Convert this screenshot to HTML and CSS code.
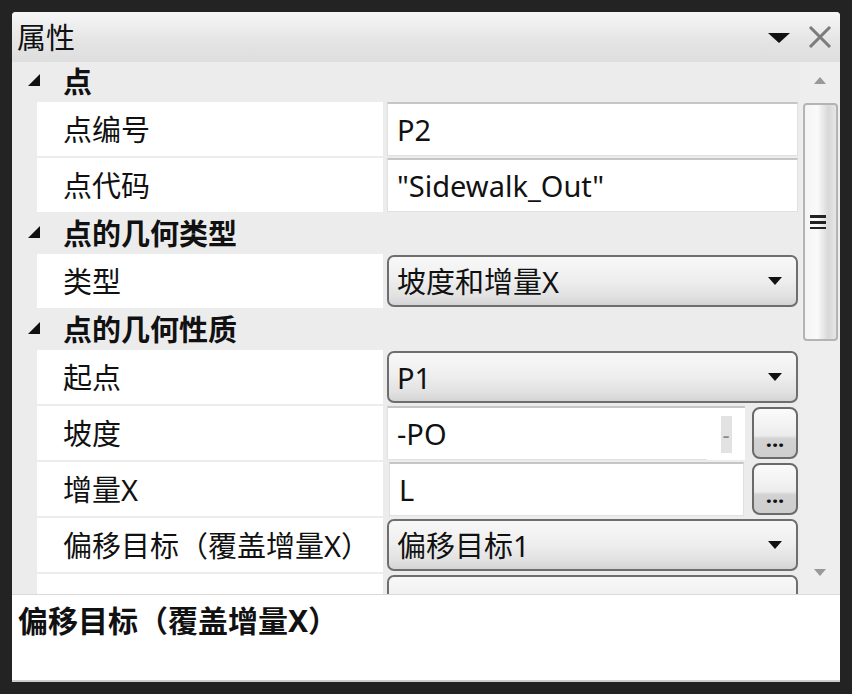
FILE: index.html
```html
<!DOCTYPE html>
<html lang="zh-CN">
<head>
  <meta charset="UTF-8">
  <title>属性</title>
  <link rel="stylesheet" href="styles.css">
</head>
<body>
  <div class="panel">
    <div class="titlebar">
      <span class="title">属性</span>
      <span class="tools">
        <svg class="menu-arrow" width="22" height="10" viewBox="0 0 22 10"><polygon points="0,0 22,0 11,10" fill="#111"/></svg>
        <svg class="close" width="24" height="22" viewBox="0 0 24 22"><path d="M2 1 L22 21 M22 1 L2 21" stroke="#7c7c7c" stroke-width="3" fill="none"/></svg>
      </span>
    </div>

    <div class="body">
      <div class="grid">
        <div class="cat">
          <svg class="expander" width="12" height="12" viewBox="0 0 12 12"><polygon points="12,0 12,12 0,12" fill="#111"/></svg>
          <span>点</span>
        </div>
        <div class="prop">
          <div class="label">点编号</div>
          <div class="value field">P2</div>
        </div>
        <div class="prop">
          <div class="label">点代码</div>
          <div class="value field">"Sidewalk_Out"</div>
        </div>

        <div class="cat">
          <svg class="expander" width="12" height="12" viewBox="0 0 12 12"><polygon points="12,0 12,12 0,12" fill="#111"/></svg>
          <span>点的几何类型</span>
        </div>
        <div class="prop">
          <div class="label">类型</div>
          <div class="value combo"><span>坡度和增量X</span><i class="drop"></i></div>
        </div>

        <div class="cat">
          <svg class="expander" width="12" height="12" viewBox="0 0 12 12"><polygon points="12,0 12,12 0,12" fill="#111"/></svg>
          <span>点的几何性质</span>
        </div>
        <div class="prop">
          <div class="label">起点</div>
          <div class="value combo"><span>P1</span><i class="drop"></i></div>
        </div>
        <div class="prop">
          <div class="label">坡度</div>
          <div class="value split">
            <div class="field slope">-PO</div>
            <div class="spin"><span>-</span></div>
            <div class="dots">...</div>
          </div>
        </div>
        <div class="prop">
          <div class="label">增量X</div>
          <div class="value split">
            <div class="field delta">L</div>
            <div class="dots">...</div>
          </div>
        </div>
        <div class="prop">
          <div class="label">偏移目标（覆盖增量X）</div>
          <div class="value combo"><span>偏移目标1</span><i class="drop"></i></div>
        </div>
        <div class="prop">
          <div class="label"></div>
          <div class="value combo"></div>
        </div>
      </div>

      <div class="scrollbar">
        <i class="arrow up"></i>
        <div class="thumb"><span class="grip"></span></div>
        <i class="arrow down"></i>
      </div>
    </div>

    <div class="desc">偏移目标（覆盖增量X）</div>
  </div>
</body>
</html>
```

FILE: styles.css
```css
body {
  margin: 0;
  padding: 12px;
  background: #232323;
  font-family: "Noto Sans", "Noto Sans CJK SC", sans-serif;
  color: #111;
}
.panel {
  width: 828px;
  height: 670px;
  display: flex;
  flex-direction: column;
  background: #ececec;
  border-radius: 4px 4px 0 0;
  overflow: hidden;
}
.titlebar {
  height: 50px;
  flex: none;
  display: flex;
  align-items: center;
  justify-content: space-between;
  padding: 0 8px 0 5px;
  background: linear-gradient(#f6f6f6, #e4e4e4 60%, #dedede);
}
.title {
  font-size: 29px;
  line-height: 1;
  margin-top: 1px;
}
.tools {
  display: flex;
  align-items: center;
  gap: 18px;
}
.menu-arrow {
  margin-top: 2px;
}
.body {
  height: 532px;
  flex: none;
  display: flex;
  overflow: hidden;
}
.grid {
  width: 788px;
  overflow: hidden;
}
.cat {
  height: 39px;
  margin-bottom: 1px;
  display: flex;
  align-items: center;
  font-size: 29px;
  font-weight: bold;
  line-height: 1;
}
.expander {
  margin: 0 23px 4px 16px;
}
.prop {
  height: 54px;
  margin-bottom: 2px;
  display: flex;
  padding-left: 25px;
}
.label {
  width: 320px;
  padding-left: 26px;
  background: #fff;
  display: flex;
  align-items: center;
  font-size: 29px;
  line-height: 1;
  white-space: nowrap;
}
.value {
  width: 411px;
  margin-left: 4px;
  box-sizing: border-box;
  font-size: 29px;
  line-height: 1;
}
.field {
  display: flex;
  align-items: center;
  background: #fff;
  border: 1px solid #e0e0e0;
  border-top: 2px solid #c6c6c6;
  padding-left: 9px;
  box-sizing: border-box;
  height: 54px;
}
.combo {
  height: 52px;
  margin-top: 1px;
  display: flex;
  align-items: center;
  justify-content: space-between;
  padding: 0 14px 0 8px;
  border: 2px solid #6e6e6e;
  border-radius: 7px;
  background: linear-gradient(#f8f8f8, #efefef 45%, #e2e2e2 80%, #d4d4d4);
}
.drop {
  width: 0;
  height: 0;
  border-left: 7px solid transparent;
  border-right: 7px solid transparent;
  border-top: 8px solid #111;
}
.split {
  display: flex;
  align-items: center;
}
.slope {
  width: 320px;
  border-right: none;
}
.spin {
  width: 38px;
  height: 54px;
  box-sizing: border-box;
  background: #fff;
  border-top: 2px solid #c6c6c6;
  display: flex;
  justify-content: center;
  align-items: center;
}
.spin span {
  width: 11px;
  height: 37px;
  background: #e2e2e2;
  color: #888;
  font-size: 22px;
  display: flex;
  justify-content: center;
  align-items: center;
}
.delta {
  width: 355px;
  margin-left: 2px;
}
.dots {
  width: 46px;
  height: 52px;
  margin-left: auto;
  box-sizing: border-box;
  border: 2px solid #6a6a6a;
  border-radius: 8px;
  background: linear-gradient(#fbfbfb, #ececec 55%, #d2d2d2 62%, #cdcdcd);
  font-size: 22px;
  font-weight: bold;
  line-height: 1;
  display: flex;
  justify-content: center;
  align-items: flex-end;
  padding-bottom: 8px;
}
.scrollbar {
  width: 40px;
  flex: none;
  display: flex;
  flex-direction: column;
  align-items: center;
  background: #eeeeee;
}
.arrow {
  width: 0;
  height: 0;
  border-left: 6px solid transparent;
  border-right: 6px solid transparent;
}
.arrow.up {
  margin-top: 15px;
  border-bottom: 7px solid #999;
}
.arrow.down {
  margin-top: auto;
  margin-bottom: 18px;
  border-top: 7px solid #999;
}
.thumb {
  width: 35px;
  height: 238px;
  margin-top: 19px;
  box-sizing: border-box;
  border: 2px solid #b4b4b4;
  border-radius: 4px;
  background: linear-gradient(to right, #f4f4f4, #fafafa 40%, #d8d8d8 75%, #e6e6e6);
  display: flex;
  justify-content: center;
  align-items: center;
}
.grip {
  width: 16px;
  height: 14px;
  margin-left: -4px;
  background: repeating-linear-gradient(#222 0 3px, transparent 3px 6px);
}
.desc {
  flex: none;
  background: #fff;
  border-top: 1px solid #dadada;
  border-bottom: 2px solid #cfcfcf;
  padding: 11px 0 0 6px;
  height: 74px;
  font-size: 30px;
  font-weight: bold;
  line-height: 1;
}
```
